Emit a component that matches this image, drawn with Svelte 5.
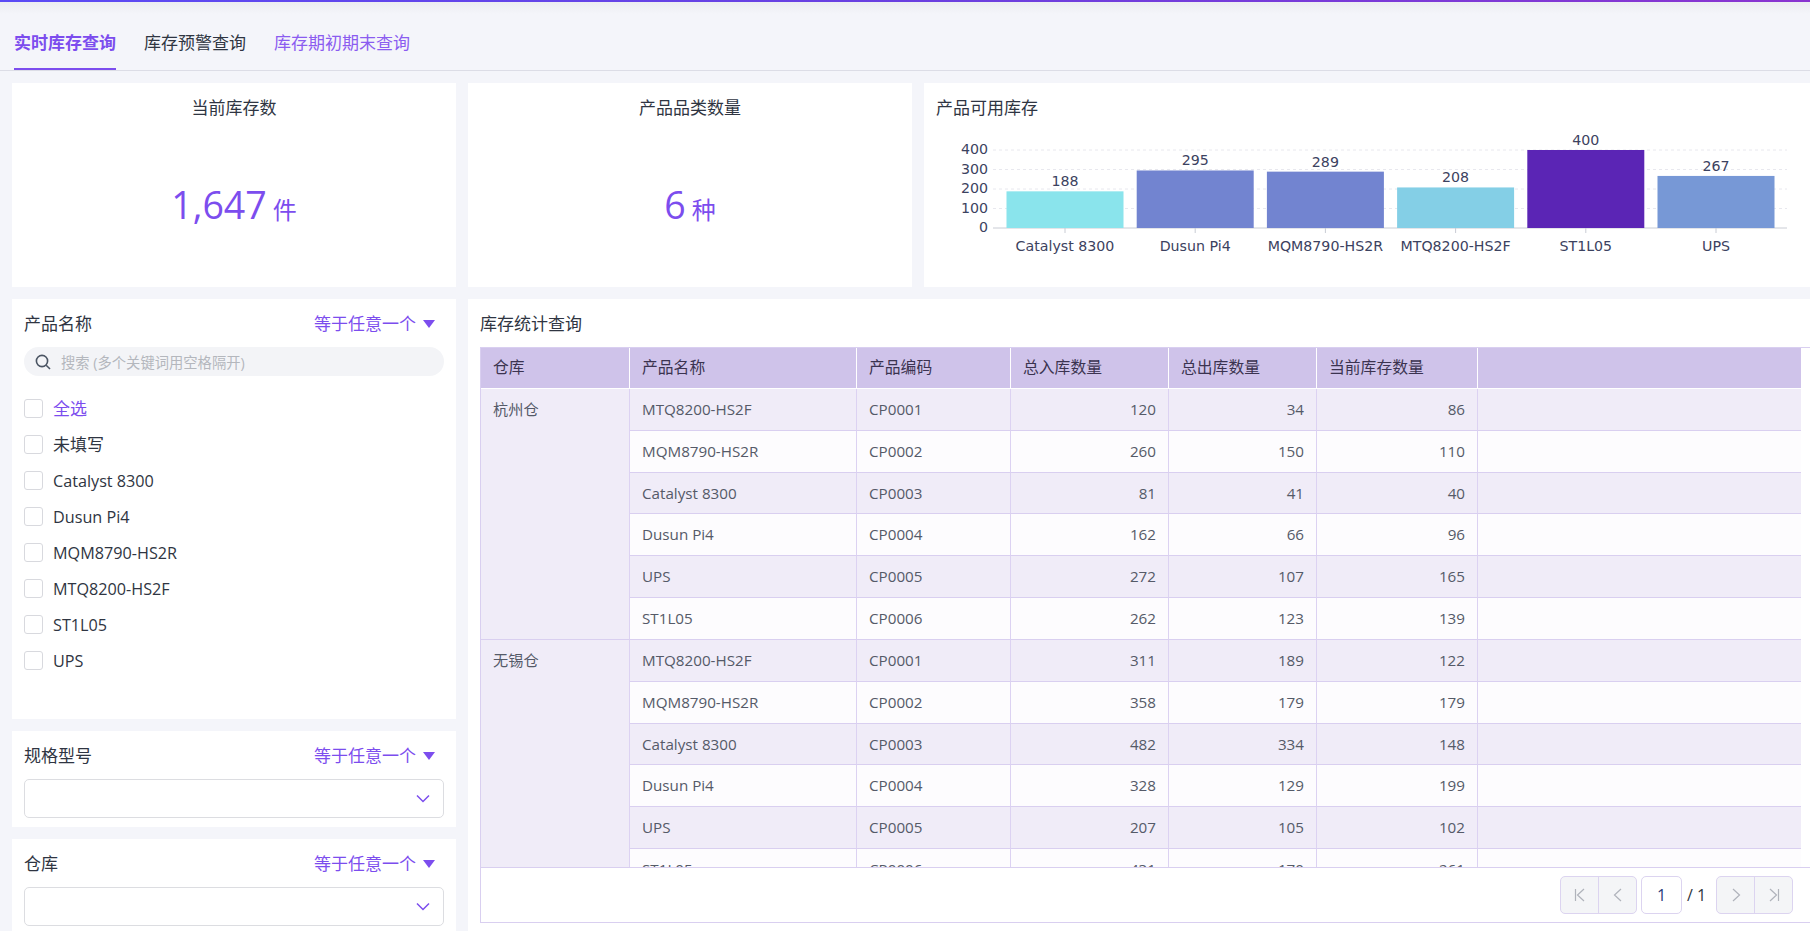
<script>
  const names = ['Catalyst 8300', 'Dusun Pi4', 'MQM8790-HS2R', 'MTQ8200-HS2F', 'ST1L05', 'UPS'];
  const bars = [
    { name: 'Catalyst 8300', v: 188, c: '#8ae4ec' },
    { name: 'Dusun Pi4', v: 295, c: '#7284d0' },
    { name: 'MQM8790-HS2R', v: 289, c: '#7284d0' },
    { name: 'MTQ8200-HS2F', v: 208, c: '#84cfe6' },
    { name: 'ST1L05', v: 400, c: '#5b25b5' },
    { name: 'UPS', v: 267, c: '#7798d6' }
  ];
  const codes = ['MTQ8200-HS2F', 'MQM8790-HS2R', 'Catalyst 8300', 'Dusun Pi4', 'UPS', 'ST1L05'];
  const groups = [
    { wh: '杭州仓', rows: [[120, 34, 86], [260, 150, 110], [81, 41, 40], [162, 66, 96], [272, 107, 165], [262, 123, 139]] },
    { wh: '无锡仓', rows: [[311, 189, 122], [358, 179, 179], [482, 334, 148], [328, 129, 199], [207, 105, 102], [431, 170, 261]] }
  ];
  const heads = ['仓库', '产品名称', '产品编码', '总入库数量', '总出库数量', '当前库存数量', ''];
  const h = (v) => (v / 400) * 78;
</script>

<div class="page">
  <div class="topline"></div>
  <div class="shade"></div>
  <nav class="tabs">
    <span class="tab active">实时库存查询</span>
    <span class="tab">库存预警查询</span>
    <span class="tab link">库存期初期末查询</span>
  </nav>

  <section class="kpis">
    <div class="card kpi">
      <div class="kpi-title">当前库存数</div>
      <div class="kpi-value">1,647<small>件</small></div>
    </div>
    <div class="card kpi">
      <div class="kpi-title">产品品类数量</div>
      <div class="kpi-value">6<small>种</small></div>
    </div>
    <div class="card chart">
      <div class="chart-title">产品可用库存</div>
      <svg width="886" height="164" viewBox="924 123 886 164">
        {#each [0, 100, 200, 300, 400] as t}
          <line x1="993" x2="1787" y1={228 - h(t)} y2={228 - h(t)} class={t ? 'grid' : 'axis'} />
          <text x="988" y={228 - h(t) + 4} text-anchor="end" class="tick">{t}</text>
        {/each}
        {#each bars as b, i}
          <rect x={1006.5 + i * 130.2} y={228 - h(b.v)} width="117" height={h(b.v)} fill={b.c} />
          <line x1={1065 + i * 130.2} x2={1065 + i * 130.2} y1="228" y2="233" class="axis" />
          <text x={1065 + i * 130.2} y={228 - h(b.v) - 5} text-anchor="middle" class="val">{b.v}</text>
          <text x={1065 + i * 130.2} y="251" text-anchor="middle" class="cat">{b.name}</text>
        {/each}
      </svg>
    </div>
  </section>

  <section class="main">
    <aside class="filters">
      <div class="card filter big">
        <div class="f-head"><span>产品名称</span><span class="op">等于任意一个<i class="caret"></i></span></div>
        <div class="search">
          <svg width="16" height="16" viewBox="0 0 16 16" fill="none"><circle cx="7" cy="7" r="5.600" stroke="#4b5563" stroke-width="1.600" /><path d="M11.200 11.200 15 15" stroke="#4b5563" stroke-width="1.600" /></svg>
          <span>搜索 (多个关键词用空格隔开)</span>
        </div>
        <ul class="opts">
          <li class="all cjk"><i class="box"></i>全选</li>
          <li class="cjk"><i class="box"></i>未填写</li>
          {#each names as it}
            <li><i class="box"></i>{it}</li>
          {/each}
        </ul>
      </div>
      <div class="card filter">
        <div class="f-head"><span>规格型号</span><span class="op">等于任意一个<i class="caret"></i></span></div>
        <div class="select"><svg width="14" height="9" viewBox="0 0 14 9" fill="none"><path d="M1 1.500 7 7.500 13 1.500" stroke="#7c4dee" stroke-width="1.500" /></svg></div>
      </div>
      <div class="card filter">
        <div class="f-head"><span>仓库</span><span class="op">等于任意一个<i class="caret"></i></span></div>
        <div class="select"><svg width="14" height="9" viewBox="0 0 14 9" fill="none"><path d="M1 1.500 7 7.500 13 1.500" stroke="#7c4dee" stroke-width="1.500" /></svg></div>
      </div>
    </aside>

    <div class="card tablecard">
      <div class="t-title">库存统计查询</div>
      <div class="t-frame">
        <div class="t-scroll">
          <div class="t-grid">
            {#each heads as hd}
              <div class="th">{hd}</div>
            {/each}
            {#each groups as g}
              <div class="wh">{g.wh}</div>
              {#each g.rows as r, i}
                <div class="td {i % 2 ? 'even' : 'odd'}">{codes[i]}</div>
                <div class="td {i % 2 ? 'even' : 'odd'}">CP000{i + 1}</div>
                <div class="td {i % 2 ? 'even' : 'odd'} num">{r[0]}</div>
                <div class="td {i % 2 ? 'even' : 'odd'} num">{r[1]}</div>
                <div class="td {i % 2 ? 'even' : 'odd'} num">{r[2]}</div>
                <div class="td {i % 2 ? 'even' : 'odd'} c7"></div>
              {/each}
            {/each}
          </div>
        </div>
        <div class="pager">
          <div class="btns">
            <span class="btn"><svg width="14" height="14" viewBox="0 0 14 14" fill="none"><path d="M2.500 1v12M11 1 4.500 7l6.500 6" stroke="#b0b3bb" stroke-width="1.200" /></svg></span>
            <span class="btn"><svg width="14" height="14" viewBox="0 0 14 14" fill="none"><path d="M10 1 3.500 7l6.500 6" stroke="#b0b3bb" stroke-width="1.200" /></svg></span>
          </div>
          <span class="pg">1</span>
          <span class="total">/ 1</span>
          <div class="btns">
            <span class="btn"><svg width="14" height="14" viewBox="0 0 14 14" fill="none"><path d="M4 1l6.500 6L4 13" stroke="#b0b3bb" stroke-width="1.200" /></svg></span>
            <span class="btn"><svg width="14" height="14" viewBox="0 0 14 14" fill="none"><path d="M11.500 1v12M3 1l6.500 6L3 13" stroke="#b0b3bb" stroke-width="1.200" /></svg></span>
          </div>
        </div>
      </div>
    </div>
  </section>
</div>

<style>
  :global(body) {
    margin: 0;
    background: #f4f5fa;
    overflow: hidden;
  }
  .page {
    height: 931px;
    overflow: hidden;
    background: #f4f5fa;
    font-family: "Open Sans", "Noto Sans CJK SC", sans-serif;
    color: #2f3542;
    font-size: 17px;
  }
  .topline {
    height: 2px;
    background: linear-gradient(90deg, #5b4bf5, #6a40e0 50%, #8a35d0);
  }
  .shade {
    height: 12px;
    background: linear-gradient(#ecedf1, #f4f5fa);
  }
  .tabs {
    display: flex;
    gap: 28px;
    height: 56px;
    padding-left: 14px;
    border-bottom: 1px solid #dcdde6;
  }
  .tab {
    height: 54px;
    line-height: 58px;
    white-space: nowrap;
  }
  .tab.active {
    color: #7c4dee;
    font-weight: 700;
    border-bottom: 2px solid #7c4dee;
  }
  .tab.link {
    color: #8b5cf0;
  }
  .kpis {
    display: flex;
    gap: 12px;
    margin: 12px 0 0 12px;
    height: 204px;
  }
  .card {
    background: #fff;
  }
  .kpi {
    width: 444px;
    text-align: center;
  }
  .kpi-title {
    margin-top: 12px;
    line-height: 26px;
  }
  .kpi-value {
    margin-top: 54px;
    font-size: 37.500px;
    line-height: 60px;
    color: #7c4dee;
    font-weight: 400;
  }
  .kpi-value small {
    font-size: 24px;
    margin-left: 6px;
    font-family: "Noto Sans CJK SC", sans-serif;
  }
  .chart {
    flex: 1;
    min-width: 0;
    overflow: hidden;
  }
  .chart-title {
    margin: 12px 0 0 12px;
    line-height: 26px;
  }
  .chart svg {
    display: block;
    margin-top: 2px;
  }
  .grid {
    stroke: #e8e8ee;
    stroke-dasharray: 3 3;
  }
  .axis {
    stroke: #c9ccd4;
  }
  .tick, .val, .cat {
    font-family: "DejaVu Sans", sans-serif;
    fill: #3c4260;
    font-size: 14.200px;
  }
  .main {
    display: flex;
    gap: 12px;
    margin: 12px 0 0 12px;
  }
  .filters {
    width: 444px;
    display: flex;
    flex-direction: column;
    gap: 12px;
  }
  .filter {
    padding: 0 12px;
    height: 96px;
    box-sizing: border-box;
  }
  .filter.big {
    height: 420px;
  }
  .f-head {
    display: flex;
    justify-content: space-between;
    height: 46px;
    margin-bottom: 2px;
    align-items: center;
  }
  .op {
    color: #7c4dee;
    display: flex;
    align-items: center;
    padding-right: 9px;
    gap: 7px;
  }
  .caret {
    width: 0;
    height: 0;
    margin-top: 3px;
    border: 6.500px solid transparent;
    border-top: 8px solid #7c4dee;
    border-bottom: 0;
  }
  .search {
    height: 29px;
    border-radius: 15px;
    background: #f3f4f7;
    display: flex;
    align-items: center;
    gap: 10px;
    padding-left: 11px;
    color: #b4b7bd;
    font-size: 14.300px;
  }
  .opts {
    list-style: none;
    margin: 23px 0 0;
    padding: 0;
    font-size: 16.200px;
  }
  .opts li {
    height: 36px;
    display: flex;
    gap: 10px;
    line-height: 21px;
  }
  .opts .cjk {
    font-size: 17px;
    line-height: 19px;
  }
  .opts .all {
    color: #7c4dee;
  }
  .box {
    width: 19px;
    height: 19px;
    box-sizing: border-box;
    border: 1px solid #d8d9de;
    border-radius: 3px;
    flex: none;
  }
  .select {
    height: 39px;
    box-sizing: border-box;
    border: 1px solid #dcdde1;
    border-radius: 5px;
    display: flex;
    align-items: center;
    justify-content: flex-end;
    padding-right: 13px;
  }
  .tablecard {
    flex: 1;
    min-width: 0;
    height: 632px;
    padding-left: 12px;
    box-sizing: border-box;
    overflow: hidden;
  }
  .t-title {
    height: 48px;
    line-height: 50px;
  }
  .t-frame {
    border-top: 1px solid #d9cff0;
    border-bottom: 1px solid #d9cff0;
    border-left: 1px solid #d9cff0;
    height: 576px;
    box-sizing: border-box;
  }
  .t-scroll {
    height: 519px;
    overflow: hidden;
    width: 1320px;
  }
  .t-grid {
    display: grid;
    grid-template-columns: 149px 227px 154px 158px 148px 161px 323px;
    grid-template-rows: 41px repeat(12, 41.830px);
    font-size: 15.200px;
  }
  .th {
    background: #cfc3ea;
    border-right: 1px solid #fff;
    border-bottom: 1px solid #fff;
    padding-left: 12px;
    font-size: 15.800px;
    line-height: 39px;
    box-sizing: border-box;
    color: #3b3350;
  }
  .th:nth-child(7) {
    border-right: 0;
  }
  .wh {
    grid-row: span 6;
    background: #f0ecf8;
    border-right: 1px solid #dcd2f2;
    border-bottom: 1px solid #d9cff0;
    padding: 9px 12px;
    line-height: 22px;
    box-sizing: border-box;
    color: #555a68;
  }
  .td {
    border-right: 1px solid #dcd2f2;
    border-bottom: 1px solid #d9cff0;
    padding: 0 12px;
    line-height: 41px;
    box-sizing: border-box;
    color: #555a68;
    white-space: nowrap;
  }
  .c7 {
    border-right: 0;
  }
  .odd {
    background: #f0ecf8;
  }
  .even {
    background: #fdfcfe;
  }
  .num {
    text-align: right;
  }
  .pager {
    border-top: 1px solid #d9cff0;
    height: 55px;
    box-sizing: border-box;
    display: flex;
    align-items: center;
    justify-content: flex-end;
    padding-right: 17px;
  }
  .btns {
    display: flex;
    width: 77px;
    height: 38px;
    box-sizing: border-box;
    border: 1px solid #dcd4f0;
    border-radius: 5px;
    background: #f4f5f7;
  }
  .btn {
    flex: 1;
    display: flex;
    align-items: center;
    justify-content: center;
  }
  .btn:first-child {
    border-right: 1px solid #dcd4f0;
  }
  .pg {
    width: 41px;
    height: 38px;
    margin-left: 4px;
    box-sizing: border-box;
    border: 1px solid #dcd4f0;
    border-radius: 5px;
    text-align: center;
    line-height: 36px;
    color: #2a3a7a;
    font-size: 16px;
  }
  .total {
    width: 34px;
    padding-left: 5px;
    box-sizing: border-box;
    font-size: 16px;
  }
</style>
